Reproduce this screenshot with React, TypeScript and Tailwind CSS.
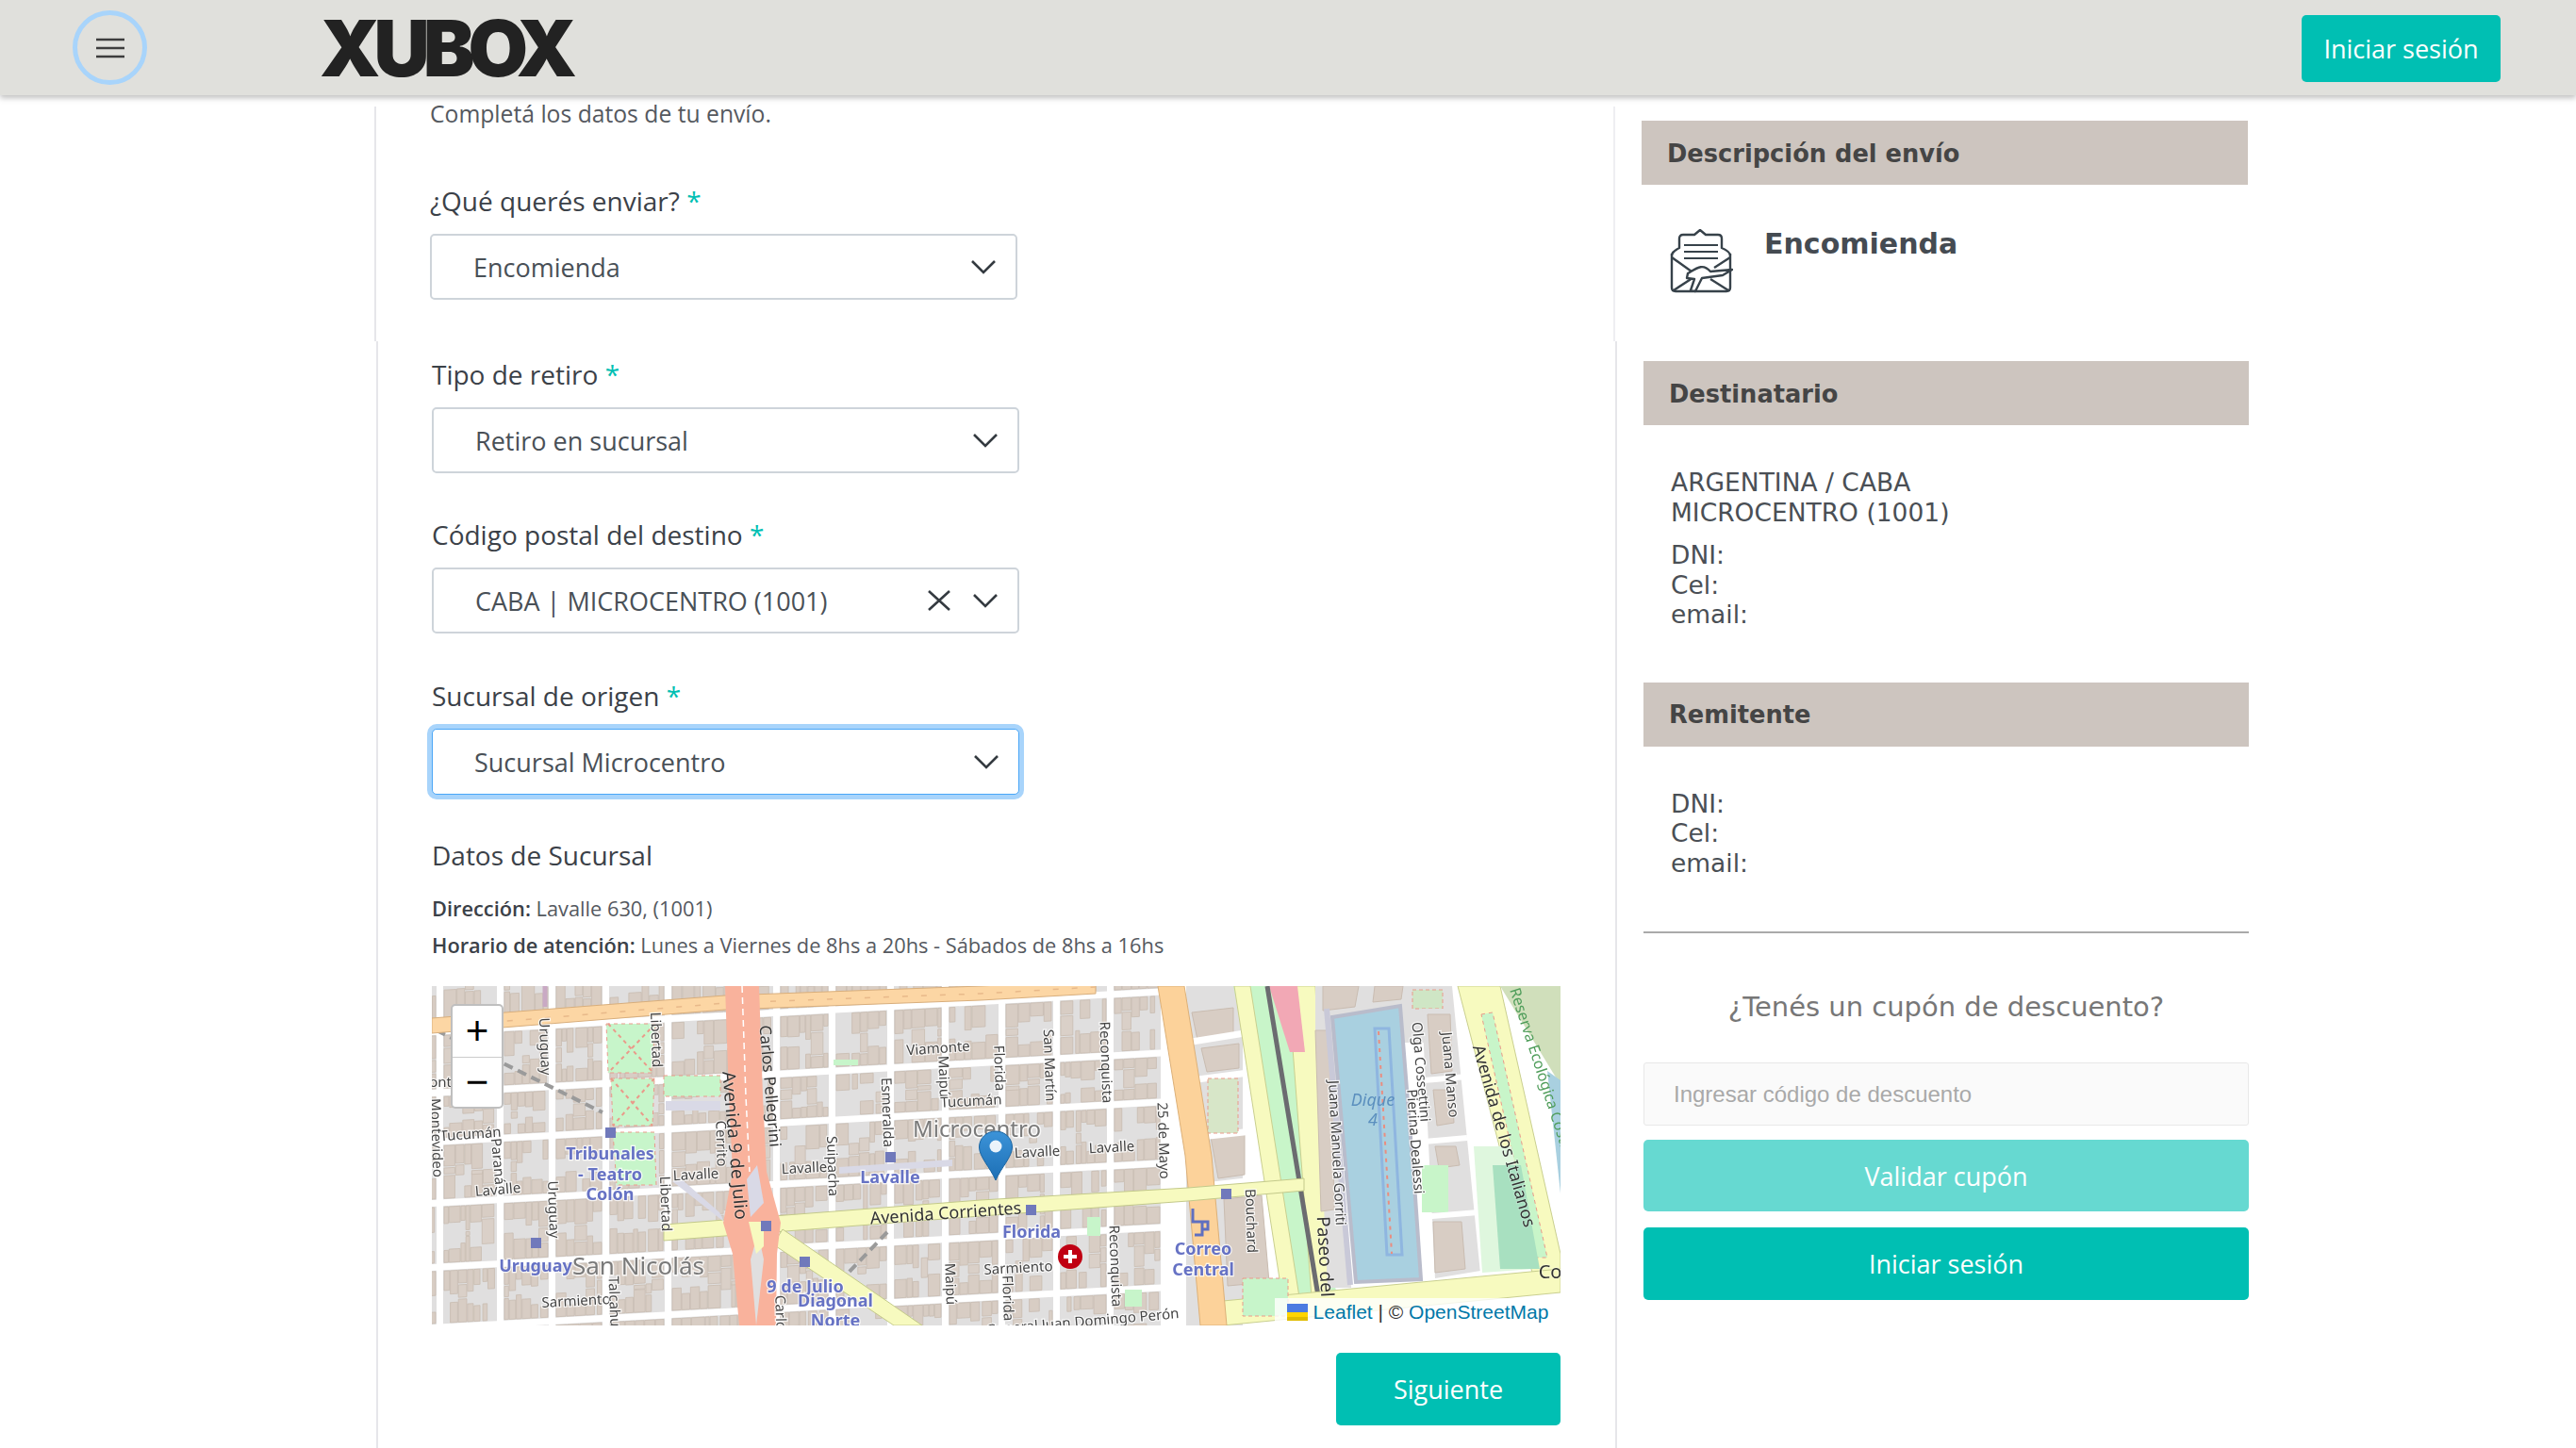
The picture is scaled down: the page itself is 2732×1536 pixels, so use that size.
import { ReactNode } from 'react';

// small seeded random so the map blocks come out the same on each load
function makeRand(seed: number) {
    let s = seed;
    return () => {
        s = (s * 16807) % 2147483647;
        return (s - 1) / 2147483646;
    };
}

const colsX = [-40, 8, 72, 127, 184, 250, 365, 424, 486, 544, 604, 662, 719, 776];
const rowsY = [-60, 48, 113, 165, 230, 298, 362, 420, 470];

function buildBlocks() {
    const rand = makeRand(4711);
    const blocks: ReactNode[] = [];
    for (let c = 0; c < colsX.length - 1; c++) {
        for (let r = 0; r < rowsY.length - 1; r++) {
            const x1 = colsX[c] + 4;
            const x2 = colsX[c + 1] - 3;
            const y1 = rowsY[r] + 4;
            const y2 = rowsY[r + 1] - 3;
            blocks.push(<rect key={`b${c}-${r}`} x={x1} y={y1} width={x2 - x1} height={y2 - y1} fill="#e0dfdf" />);
            let x = x1 + 1;
            while (x < x2 - 4) {
                const w = Math.min(4 + rand() * 10, x2 - x - 1);
                const h = y2 - y1;
                const d1 = h * (0.2 + rand() * 0.25);
                const d2 = h * (0.2 + rand() * 0.25);
                if (rand() > 0.12) {
                    blocks.push(<rect key={`t${c}-${r}-${x}`} x={x} y={y1 + 1} width={w} height={d1} fill="#d8cdc4" stroke="#c9bcb1" strokeWidth="0.8" />);
                }
                if (rand() > 0.12) {
                    blocks.push(<rect key={`u${c}-${r}-${x}`} x={x} y={y2 - d2 - 1} width={w} height={d2} fill="#d8cdc4" stroke="#c9bcb1" strokeWidth="0.8" />);
                }
                if (rand() > 0.75) {
                    blocks.push(<rect key={`m${c}-${r}-${x}`} x={x} y={y1 + d1 + 3} width={w} height={Math.max(4, h - d1 - d2 - 6)} fill="#dad0c8" stroke="#c9bcb1" strokeWidth="0.8" />);
                }
                x += w + (rand() > 0.85 ? 3 : 0.8);
            }
        }
    }
    return blocks;
}

type Lbl = [string, number, number, number, number?];

const streetLabels: Lbl[] = [
    ['Uruguay', 120, 64, 88], ['Libertad', 238, 57, 88], ['Viamonte', 537, 66, -4], ['Maipú', 543, 96, 88],
    ['Cerrito', 307, 167, 88], ['Esmeralda', 483, 134, 88], ['Tucumán', 41, 157, -4], ['Tucumán', 572, 122, -3],
    ['ont', 9, 102, 0], ['Montevideo', 5, 161, 88], ['Paraná', 70, 186, 85], ['Lavalle', 70, 216, -5],
    ['Uruguay', 129, 237, 88], ['Lavalle', 280, 200, -3], ['Libertad', 248, 231, 88], ['Suipacha', 425, 191, 88],
    ['Lavalle', 395, 193, -3], ['Lavalle', 642, 176, -3], ['Lavalle', 721, 171, -3], ['Sarmiento', 153, 334, -3],
    ['Talcahuano', 194, 348, 88], ['Maipú', 550, 316, 88], ['Carlos', 370, 350, 88], ['San Martín', 655, 84, 88],
    ['Reconquista', 715, 81, 88], ['Florida', 602, 87, 88], ['25 de Mayo', 776, 164, 88], ['Bouchard', 869, 249, 88],
    ['Reconquista', 725, 297, 88], ['Florida', 611, 331, 88], ['Sarmiento', 622, 299, -3], ['General Juan Domingo Perón', 690, 356, -5],
    ['Juana Manuela Gorriti', 960, 177, 87], ['Olga Cossettini', 1049, 91, 85], ['Pierina Dealessi', 1043, 165, 86], ['Juana Manso', 1080, 94, 85],
];

const bigLabels: Lbl[] = [
    ['Carlos Pellegrini', 359, 106, 85, 17], ['Avenida 9 de Julio', 321, 169, 85, 19], ['Avenida Corrientes', 545, 241, -4, 18],
    ['Paseo del', 947, 287, 87, 19], ['Avenida de los Italianos', 1137, 159, 74, 18], ['Co', 1186, 304, 0, 20],
];

const stationLabels: [string, number, number][] = [
    ['Tribunales', 189, 184], ['- Teatro', 189, 206], ['Colón', 189, 227], ['Lavalle', 486, 209], ['Uruguay', 110, 303],
    ['9 de Julio', 396, 325], ['Diagonal', 428, 340], ['Norte', 428, 361], ['Florida', 636, 267], ['Correo', 818, 285], ['Central', 818, 307],
];

const stations = [[189, 155], [486, 181], [110, 272], [354, 254], [395, 292], [635, 237], [842, 220]];

function MapDrawing() {
    return (
        <svg viewBox="0 0 1197 360" className="block w-[1197px] h-[360px] blur-[0.6px] bg-white">
            <g transform="matrix(1,-0.055,0,1,0,0)">{buildBlocks()}</g>

            {/* lineas de subte punteadas */}
            <path d="M5 47L181 134M483 261L437 309" stroke="#9a9a9a" strokeWidth="4" strokeDasharray="10 6" fill="none" />
            <path d="M120 0v22" stroke="#c9a9c4" strokeWidth="5" />

            {/* lado del puerto */}
            <rect x="800" y="0" width="60" height="360" fill="#e0dfdf" />
            <path d="M806 28l44-5 0 30-38 4zM816 66l40-5 0 26-34 4zM826 160l36-4 0 44-28 4zM840 226l40-4 8 92-44 4z" fill="#d8cdc4" stroke="#c9bcb1" />
            <path d="M800 60L862 50M805 100L866 92M815 160L870 154M820 212L880 205" stroke="#fff" strokeWidth="7" fill="none" />
            <path d="M823 98h32v58h-32z" fill="#d7e6c8" stroke="#ea9a8a" strokeDasharray="4 3" />
            <path d="M850 0L920 330 960 330 905 0z" fill="#c8f5c9" />
            <path d="M851 0h17l52 330h-18z" fill="#f7fabf" stroke="#c9cf8f" />
            <path d="M908 0h29l16 330h-20z" fill="#f7fabf" stroke="#c9cf8f" />
            <path d="M888 0h30l8 70h-16z" fill="#f2a8b5" />
            <path d="M886 0L941 335" stroke="#6b6b70" strokeWidth="5" fill="none" />
            <path d="M937 0h160v60h-160zM937 40h20l18 280h-25z" fill="#e0dfdf" />
            <path d="M937 47h16l4 190-14 2zM945 0h38l-4 22-34 4zM1000 0h30l-2 14-30 3z" fill="#d8cdc4" stroke="#c9bcb1" />
            <path d="M1040 4h32v20h-32z" fill="#cfe6c5" stroke="#ea9a8a" strokeDasharray="4 3" />
            <path d="M949 24L974 317" stroke="#c9c9d8" strokeWidth="6" fill="none" />
            <path d="M955 33l72-12 16 203 6 87-69 3z" fill="#a9d0e0" stroke="#b9bccb" strokeWidth="4" />
            <path d="M1000 45h15l14 240h-16z" fill="none" stroke="#8fb6e0" strokeWidth="3" />
            <path d="M1004 48l14 236" stroke="#ea8d80" strokeWidth="2" strokeDasharray="4 5" fill="none" />
            <path d="M1050 24h50l24 276-60 10z" fill="#e0dfdf" />
            <path d="M1056 30h24l2 60-22 3zM1062 110h20l2 35-18 3zM1064 170h22l4 20-22 3zM1062 250h30l4 50-32 4z" fill="#d8cdc4" stroke="#c9bcb1" />
            <rect x="1050" y="190" width="28" height="50" fill="#c8f5c9" />
            <path d="M1082 0h16l32 305h-18z" fill="#fff" />
            <path d="M1052 100l46-4M1052 165l46-4M1050 245l60-5" stroke="#fff" strokeWidth="6" fill="none" />
            <path d="M1088 0h45l64 284v20h-30z" fill="#f7fabf" stroke="#c9cf8f" />
            <path d="M1113 30l12-2 58 260-12 0z" fill="#c8f5c9" stroke="#ea9a8a" strokeDasharray="4 4" />
            <path d="M1105 170l40 0 24 130-55 4z" fill="#dff7de" />
            <path d="M1125 190l30 0 20 110-42 0z" fill="#a8e0c0" />
            <path d="M1133 0h64v105z" fill="#d0dfbb" />
            <path d="M1183 90l14 10v120z" fill="#a9d0e0" />
            <path d="M839 334L1197 300V325L839 360z" fill="#f7fabf" stroke="#c9cf8f" />

            {/* avenidas */}
            <path d="M0 34L311 10 582 0 704 -6V8L582 15 311 25 0 50z" fill="#fcd6a4" stroke="#d8ae7c" strokeWidth="1" />
            <path d="M20 42L311 18 582 8 704 1" stroke="#e8b98a" strokeWidth="1.500" strokeDasharray="6 14" fill="none" />
            <path d="M770 0h28l29 180 16 180h-28l-16-180z" fill="#fcd29a" stroke="#dcb078" strokeWidth="1" />
            <path d="M246 253L582 227 802 214 925 204V217L802 228 582 244 246 270z" fill="#f7fabf" stroke="#c3c98a" strokeWidth="1" />
            <path d="M372 258L520 360H490L362 274z" fill="#f7fabf" stroke="#c3c98a" strokeWidth="1" />
            <path d="M311 0H347L351 117 355 197 370 251 366 284 365 360H326L319 284 309 251 319 197 315 117z" fill="#f9b29c" />
            <path d="M329 0L333 117 337 197" stroke="#fff" strokeWidth="1.500" strokeDasharray="7 5" fill="none" />
            <path d="M338 290L346 262 352 290 344 360z" fill="#e0dfdf" />
            <path d="M334 205L345 190 352 230 338 245z" fill="#d9d9e6" />
            <path d="M336 250H352L352 276 344 284z" fill="#f7fabf" />

            {/* plazas */}
            <g fill="#c7f5ca" stroke="#ea9a8a" strokeDasharray="4 4">
                <path d="M185 40h52l-4 52h-46z" />
                <path d="M190 98h46l-2 50h-42z" />
                <path d="M192 155h44l2 56h-42z" />
                <path d="M246 95h60v22h-60z" />
            </g>
            <path d="M187 40L235 92M237 40L187 92M190 98L234 148M236 98L192 148" stroke="#ea9a8a" strokeWidth="2" strokeDasharray="4 4" fill="none" />
            <path d="M248 122h58v10h-58z" fill="#d9d9e6" />
            <path d="M255 207L310 250 305 240 265 205z" fill="#d9d9e6" />
            <path d="M426 78h26v6h-26z" fill="#c7f5ca" />
            <path d="M432 192l120-8v7l-120 8z" fill="#d9d9e6" />
            <path d="M695 245h14v20h-14zM735 322h18v18h-18z" fill="#c7f5ca" />
            <path d="M860 310h48v40h-48z" fill="#c7f5ca" stroke="#ea9a8a" strokeDasharray="4 3" />

            {stations.map(([x, y]) => <rect key={`${x}-${y}`} x={x - 5} y={y - 5} width="11" height="11" fill="#7079bb" />)}
            <path d="M807 236v14h10v14h-8M817 250h6v8h-6" stroke="#5f6fc0" strokeWidth="3" fill="none" />

            <g fontFamily="'Noto Sans', sans-serif" textAnchor="middle">
                {streetLabels.map(([t, x, y, rot], i) => (
                    <text key={i} x={0} y={5} fontSize="15" fill="#444" stroke="#fff" strokeWidth="2.500" paintOrder="stroke" strokeOpacity="0.8" transform={`translate(${x} ${y}) rotate(${rot})`}>{t}</text>
                ))}
                {bigLabels.map(([t, x, y, rot, size], i) => (
                    <text key={i} x={0} y={6} fontSize={size} fill="#333" stroke="#fff" strokeWidth="1.500" paintOrder="stroke" strokeOpacity="0.35" transform={`translate(${x} ${y}) rotate(${rot})`}>{t}</text>
                ))}
                {stationLabels.map(([t, x, y], i) => (
                    <text key={i} x={x} y={y} fontSize="18" fontWeight="700" fill="#6672c4" stroke="#fff" strokeWidth="2.500" paintOrder="stroke" strokeOpacity="0.8">{t}</text>
                ))}
                <text x="219" y="306" fontSize="26" fill="#7a7a7a" stroke="#fff" strokeWidth="3" paintOrder="stroke" strokeOpacity="0.8">San Nicolás</text>
                <text x="578" y="160" fontSize="24" fill="#7a7a7a" stroke="#fff" strokeWidth="3" paintOrder="stroke" strokeOpacity="0.8">Microcentro</text>
                <text x="998" y="127" fontSize="18" fontStyle="italic" fill="#5b8fbe">Dique</text>
                <text x="998" y="148" fontSize="18" fontStyle="italic" fill="#5b8fbe">4</text>
                <text x="0" y="0" fontSize="16" fill="#4f9d5a" textAnchor="start" transform="translate(1143 4) rotate(72)">Reserva Ecológica Costanera</text>
            </g>

            <circle cx="677" cy="287" r="13" fill="#c00012" />
            <path d="M677 280v14M670 287h14" stroke="#fff" strokeWidth="4" />

            <defs>
                <linearGradient id="pin" x1="0" y1="0" x2="0" y2="1">
                    <stop offset="0" stopColor="#3c93d8" />
                    <stop offset="1" stopColor="#1c6fb5" />
                </linearGradient>
            </defs>
            <path d="M598 154c-10 0-17.500 7.500-17.500 17 0 10 12 22 17.500 35 5.500-13 17.500-25 17.500-35 0-9.500-7.500-17-17.500-17z" fill="url(#pin)" stroke="#1a64a0" strokeWidth="1" />
            <circle cx="598" cy="170" r="6.500" fill="#fff" opacity="0.9" />
        </svg>
    );
}

function Chevron() {
    return (
        <svg width="28" height="18" viewBox="0 0 28 18" className="shrink-0">
            <path d="M2 3l12 12L26 3" fill="none" stroke="#343a40" strokeWidth="2.6" />
        </svg>
    );
}

function Field({ label, value, clear, focus }: { label: string; value: string; clear?: boolean; focus?: boolean }) {
    return (
        <div className="w-[623px]">
            <div className="h-[36px] leading-[36px] text-[28px] text-[#3b4148]">
                {label} <span className="text-[#00bfb3]">*</span>
            </div>
            <div className={`mt-[17px] h-[70px] rounded-[5px] bg-white flex items-center pl-[44px] pr-[20px] text-[27px] text-[#495057] border ${focus ? 'border-[#4aa6f7] ring-[5px] ring-[#a8d4fb]' : 'border-[#ced4da] border-[2px]'}`}>
                <span className="flex-1 mt-[3px]">{value}</span>
                {clear && (
                    <svg width="26" height="24" viewBox="0 0 26 24" className="mr-[22px]">
                        <path d="M2 2l22 20M24 2L2 22" stroke="#343a40" strokeWidth="2.6" />
                    </svg>
                )}
                <Chevron />
            </div>
        </div>
    );
}

function SideBar({ children }: { children: ReactNode }) {
    return (
        <div className="h-[68px] bg-[#cdc5bf] flex items-center pl-[27px] pt-[2px] font-['DejaVu_Sans'] font-bold text-[25.700px] text-[#454545]">
            {children}
        </div>
    );
}

function TealButton({ children, className }: { children: ReactNode; className: string }) {
    return (
        <button className={`rounded-[5px] text-white text-[27px] pt-[2px] flex items-center justify-center ${className}`}>
            {children}
        </button>
    );
}

export default function App() {
    return (
        <div className="w-[2732px] h-[1536px] overflow-hidden bg-white font-['Open_Sans',sans-serif]">
            <header className="relative z-10 h-[101px] bg-[#e0e0dc] shadow-[0_3px_6px_rgba(0,0,0,0.25)] flex items-center pl-[77px] pr-[80px]">
                <button className="w-[79px] h-[79px] rounded-full border-[5px] border-[#a8d4fb] flex items-center justify-center">
                    <svg width="30" height="22" viewBox="0 0 30 22">
                        <path d="M0 2h30M0 11h30M0 20h30" stroke="#3d3d3d" strokeWidth="2.6" />
                    </svg>
                </button>
                <div className="ml-[183px] mt-[2px] w-[272px] font-['Inter'] font-black text-[82px] leading-none tracking-[-0.085em] text-[#222]">XUBOX</div>
                <TealButton className="ml-auto mt-[2px] w-[211px] h-[71px] bg-[#00bfb3]">Iniciar sesión</TealButton>
            </header>

            {/* primer tramo */}
            <div className="mt-[12px] h-[249px] ml-[397px] flex">
                <div className="w-[1314px] border-l-2 border-[#e6e6ea] pl-[57px]">
                    <p className="-mt-[10px] h-[36px] leading-[36px] text-[24.700px] text-[#55595f]">Completá los datos de tu envío.</p>
                    <div className="mt-[56px]"><Field label="¿Qué querés enviar?" value="Encomienda" /></div>
                </div>
                <div className="w-[673px] border-l-2 border-[#eeeef2] pl-[28px] pt-[15px]">
                    <SideBar>Descripción del envío</SideBar>
                    <div className="mt-[47px] pl-[29px] flex">
                        <svg width="68" height="68" viewBox="0 0 68 68" fill="none" stroke="#37424a" strokeWidth="2.4" strokeLinejoin="round">
                            <path d="M3 26v36q0 4 4 4h54q4 0 4-4V26" />
                            <path d="M3 28q0-4 8-8V10q0-4 4-4h12l6-5 6 5h13q4 0 4 4v10q9 4 9 8" />
                            <path d="M16 17h36M16 24h36M16 31h36" strokeWidth="2" />
                            <path d="M3 30l21 15M65 30L48 41M5 65l23-15M63 65L44 53" />
                            <path d="M20 47c10-6 16-11 24-2l23-2-10 6-22 3-7 14-5-1 4-12-8-1z" fill="#fff" />
                        </svg>
                        <div className="ml-[33px] -mt-[1px] h-[34px] leading-[34px] font-['DejaVu_Sans'] font-bold text-[30px] text-[#454b52]">Encomienda</div>
                    </div>
                </div>
            </div>

            {/* segundo tramo, corrido dos pixeles como en la captura */}
            <div className="h-[1200px] ml-[399px] flex">
                <div className="w-[1314px] border-l-2 border-[#e6e6ea] pl-[57px] pt-[17px]">
                    <Field label="Tipo de retiro" value="Retiro en sucursal" />
                    <div className="mt-[47px]"><Field label="Código postal del destino" value="CABA | MICROCENTRO (1001)" clear /></div>
                    <div className="mt-[48px]"><Field label="Sucursal de origen" value="Sucursal Microcentro" focus /></div>

                    <h3 className="mt-[46px] h-[36px] leading-[36px] text-[28px] font-medium text-[#3b4148]">Datos de Sucursal</h3>
                    <div className="mt-[19px] text-[21.800px] leading-[39px] text-[#55595f]">
                        <p><b className="font-semibold text-[#3b4148]">Dirección:</b> Lavalle 630, (1001)</p>
                        <p><b className="font-semibold text-[#3b4148]">Horario de atención:</b> Lunes a Viernes de 8hs a 20hs - Sábados de 8hs a 16hs</p>
                    </div>

                    <div className="relative mt-[24px] w-[1197px] h-[360px] overflow-hidden">
                        <MapDrawing />
                        <div className="absolute left-[20px] top-[19px] w-[56px] h-[111px] rounded-[5px] border-2 border-[#00000040] bg-white flex flex-col font-['Liberation_Sans'] text-black">
                            <div className="h-[55px] border-b border-[#ccc] flex items-center justify-center text-[42px] leading-none">+</div>
                            <div className="flex-1 flex items-center justify-center text-[42px] leading-none">−</div>
                        </div>
                        <div className="absolute right-0 bottom-0 h-[29px] w-[303px] bg-white/80 flex items-center justify-center gap-[6px] font-['Liberation_Sans'] text-[21px] text-[#333]">
                            <svg width="22" height="18" viewBox="0 0 22 18">
                                <rect width="22" height="9" fill="#4c7be1" />
                                <rect y="9" width="22" height="5" fill="#ffd500" />
                                <rect y="14" width="22" height="4" fill="#e0bc00" />
                            </svg>
                            <span><span className="text-[#0078a8]">Leaflet</span> | © <span className="text-[#0078a8]">OpenStreetMap</span></span>
                        </div>
                    </div>

                    <div className="w-[1197px] mt-[29px] flex justify-end">
                        <TealButton className="w-[238px] h-[77px] bg-[#00bfb3]">Siguiente</TealButton>
                    </div>
                </div>

                <div className="w-[673px] border-l-2 border-[#e6e6ea] pl-[28px] pt-[21px]">
                    <div className="w-[642px]">
                        <SideBar>Destinatario</SideBar>
                        <div className="mt-[45px] pl-[29px] font-['DejaVu_Sans'] text-[26.500px] leading-[31.500px] text-[#4a4f55]">
                            <p>ARGENTINA / CABA</p>
                            <p>MICROCENTRO (1001)</p>
                            <p className="mt-[14px]">DNI:</p>
                            <p>Cel:</p>
                            <p>email:</p>
                        </div>
                        <div className="mt-[56px]"><SideBar>Remitente</SideBar></div>
                        <div className="mt-[45px] pl-[29px] font-['DejaVu_Sans'] text-[26.500px] leading-[31.500px] text-[#4a4f55]">
                            <p>DNI:</p>
                            <p>Cel:</p>
                            <p>email:</p>
                        </div>
                        <div className="mt-[57px] h-[2px] bg-[#aaa]" />
                        <p className="mt-[58px] h-[40px] leading-[40px] text-center font-['DejaVu_Sans'] text-[29px] text-[#777]">¿Tenés un cupón de descuento?</p>
                        <input
                            placeholder="Ingresar código de descuento"
                            className="mt-[39px] w-full h-[67px] bg-[#fafafa] border border-[#e8e8e8] rounded-[3px] pl-[31px] font-['Liberation_Sans'] text-[24px] placeholder:text-[#a9a9a9]"
                        />
                        <TealButton className="mt-[15px] w-full h-[76px] bg-[#66d9d1]">Validar cupón</TealButton>
                        <TealButton className="mt-[17px] w-full h-[77px] bg-[#00bfb3]">Iniciar sesión</TealButton>
                    </div>
                </div>
            </div>
        </div>
    );
}
